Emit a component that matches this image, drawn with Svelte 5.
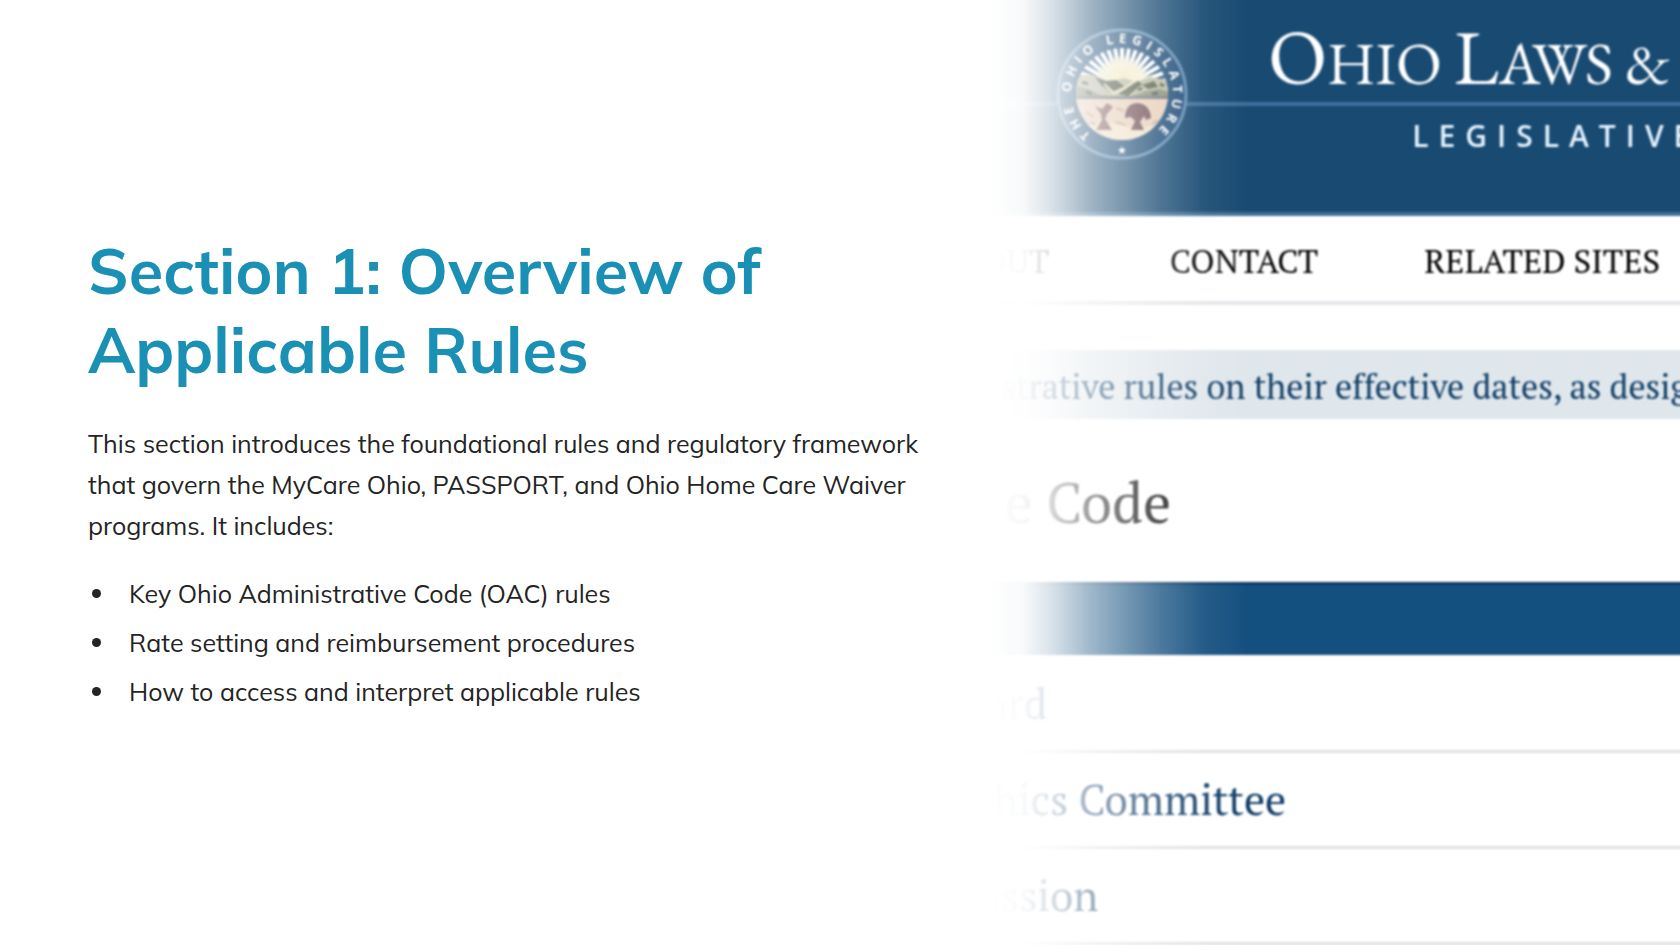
<script>
  const points = [
    'Key Ohio Administrative Code (OAC) rules',
    'Rate setting and reimbursement procedures',
    'How to access and interpret applicable rules'
  ];

  // Distance from the panel's edge, or the previous label, to the end of each label.
  const nav = [
    { label: 'OUT', width: 58 },
    { label: 'CONTACT', width: 269 },
    { label: 'RELATED SITES', width: 342 }
  ];

  const rows = [
    { label: 'ard', end: 56 },
    { label: 'hics Committee', end: 295 },
    { label: 'ission', end: 107 }
  ];

  const rays = Array.from({ length: 19 }, (_, i) => 180 + i * 10);
</script>

<main class="slide">
  <section class="copy">
    <h1>Section 1: Overview of Applicable Rules</h1>
    <p>
      This section introduces the foundational rules and regulatory framework that govern the
      MyCare Ohio, PASSPORT, and Ohio Home Care Waiver programs. It includes:
    </p>
    <ul>
      {#each points as point}
        <li>{point}</li>
      {/each}
    </ul>
  </section>

  <section class="site">
    <div class="page">
      <header class="banner">
        <svg class="seal" viewBox="-66 -66 132 132" role="img" aria-label="The Ohio Legislature">
          <defs>
            <clipPath id="disc"><circle r="46" /></clipPath>
            <path id="ring" d="M0 51 A51 51 0 0 1 0 -51 A51 51 0 0 1 0 51" />
            <radialGradient id="sun" gradientUnits="userSpaceOnUse" cx="0" cy="-12" r="30">
              <stop offset="0" stop-color="#f3e8b4" />
              <stop offset="0.6" stop-color="#f2ecd0" />
              <stop offset="1" stop-color="#f2ecd0" stop-opacity="0" />
            </radialGradient>
          </defs>
          <circle r="64" fill="#1d4c77" stroke="#5f8db5" stroke-width="3" />
          <g clip-path="url(#disc)">
            <g stroke="#fff" stroke-width="4">
              {#each rays as angle}
                <line x1="14" y1="0" x2="46" y2="0" transform="translate(0 -6) rotate({angle})" />
              {/each}
            </g>
            <circle cy="-10" r="28" fill="url(#sun)" />
            <path d="M-46 -17 Q-34 -22 -22 -16 L-12 -12 L2 -16 L14 -12 L28 -17 L46 -14 V8 H-46Z" fill="#b8b8a0" />
            <path d="M-27 -17 L-16 -13 L-6 -14 L2 -8 L-10 -2 L-20 -8Z" fill="#4c5746" />
            <path d="M-18 -10 L-8 -1 L0 -4 L14 -14" fill="none" stroke="#e7e3c2" stroke-width="2" />
            <path d="M-4 0 L16 -13 L20 -10 L6 2Z M20 -9 L32 -13 L36 -7 L26 -5Z" fill="#4f5a45" />
            <path d="M-46 -8 L-34 -5 L-22 1 L-6 3 L10 2 L24 -3 L38 -5 L46 -2 V8 H-46Z" fill="#858b74" />
            <path d="M-40 -12 L-34 -10 M-36 -2 L-30 0 M16 -4 L20 -6 M30 0 L36 -1 M38 -10 L42 -8" stroke="#4c5746" stroke-width="3" />
            <path d="M-46 2 H46 V6 H-46Z" fill="#6d7478" />
            <path d="M-46 5 H46 V48 H-46Z" fill="#e6cdb8" />
            <path d="M-46 34 Q-10 24 12 36 Q30 30 46 34 V48 H-46Z" fill="#efe0c8" />
            <path d="M-27 12 L-20 15 L-15 9 L-9 13 L-15 20 L-17 25 L-10 36 L-26 36 L-20 26 L-21 20Z" fill="#80605f" />
            <path d="M3 24 Q3 10 15 9 Q28 10 29 24 L24 26 L22 22 L18 28 L22 36 H9 L13 27 L9 23Z" fill="#6b4a50" />
            <path d="M-36 18 L-28 23 M-32 28 L-26 31 M-6 14 L2 17 M-6 28 L3 31 M30 30 L36 26" stroke="#c7a58d" stroke-width="2" />
          </g>
          <text class="motto"><textPath href="#ring" startOffset="33">THE OHIO LEGISLATURE</textPath></text>
          <text class="star" x="0" y="60">★</text>
        </svg>
        <div class="brand">
          <div class="name"><b>O</b>HIO <b>L</b>AWS &amp;</div>
          <div class="agency">LEGISLATIVE</div>
        </div>
      </header>

      <nav class="menu">
        {#each nav as item}
          <span style:width="{item.width}px">{item.label}</span>
        {/each}
      </nav>

      <div class="notice"><span>strative rules on their effective dates, as desig</span></div>
      <h2><span>e Code</span></h2>
      <div class="bar"></div>

      <div class="list">
        {#each rows as row}
          <div class="row"><span style:width="{row.end}px">{row.label}</span></div>
        {/each}
      </div>
    </div>
  </section>
</main>

<style>
  :global(body) {
    margin: 0;
    background: #fff;
  }

  .slide {
    display: grid;
    grid-template-columns: 59fr 41fr;
    height: 100vh;
    overflow: hidden;
    background: #fff;
  }

  .copy {
    display: flex;
    flex-direction: column;
    justify-content: center;
    padding: 0 60px 2px 88px;
    color: #242424;
    font-family: Mulish, Lato, sans-serif;
    font-size: 25px;
    line-height: 41px;
  }

  h1 {
    margin: 0 0 34px;
    color: #1a90b5;
    font-size: 63px;
    font-weight: 700;
    line-height: 79px;
  }

  .copy p {
    margin: 0 0 27px;
  }

  ul {
    display: grid;
    gap: 8px;
    margin: 0;
    padding: 0;
    list-style: none;
  }

  li {
    display: flex;
    align-items: center;
    gap: 28px;
    padding-left: 4px;
  }

  li::before {
    content: '';
    width: 9px;
    height: 9px;
    border-radius: 50%;
    background: #242424;
  }

  .site {
    --fade: linear-gradient(
      90deg,
      transparent 0,
      rgba(0, 0, 0, 0.03) 32px,
      rgba(0, 0, 0, 0.14) 56px,
      rgba(0, 0, 0, 0.27) 78px,
      rgba(0, 0, 0, 0.41) 100px,
      rgba(0, 0, 0, 0.53) 123px,
      rgba(0, 0, 0, 0.75) 167px,
      rgba(0, 0, 0, 0.93) 212px,
      #000 256px
    );
    min-width: 0;
    overflow: hidden;
    font-family: 'PT Serif', 'Liberation Serif', serif;
    white-space: nowrap;
    -webkit-mask-image: var(--fade);
    mask-image: var(--fade);
  }

  .page {
    margin: -4px -4px 0 0;
    filter: blur(1px);
  }

  .banner {
    position: relative;
    display: flex;
    gap: 80px;
    height: 212px;
    padding: 4px 0 0 65px;
    border-bottom: 4px solid #416f94;
    background: #184a72;
  }

  .banner::before {
    content: '';
    position: absolute;
    inset: 106px 0 auto;
    height: 4px;
    background: #416f9c;
  }

  .seal {
    position: relative;
    flex: none;
    width: 132px;
    height: 132px;
    margin-top: 28px;
  }

  .motto {
    fill: #fff;
    font: 700 13px 'Open Sans', sans-serif;
    letter-spacing: 5px;
  }

  .star {
    fill: #fff;
    font: 11px 'DejaVu Sans', sans-serif;
    text-anchor: middle;
  }

  .brand {
    color: #fff;
  }

  .name {
    padding-top: 18px;
    font-family: 'EB Garamond', 'Liberation Serif', serif;
    font-size: 60px;
    line-height: 88px;
  }

  .name b {
    font-size: 77px;
    font-weight: 400;
    line-height: 1;
  }

  .agency {
    padding: 9px 0 0 144px;
    color: #e6f4ff;
    font: 600 30px/40px 'Open Sans', sans-serif;
    letter-spacing: 10px;
  }

  .menu {
    display: flex;
    height: 85px;
    border-bottom: 4px solid #e4e7ea;
    color: #000;
    font-size: 33px;
    line-height: 89px;
  }

  .menu span,
  .notice span,
  h2 span,
  .row span {
    display: flex;
    flex: none;
    justify-content: flex-end;
  }

  .notice {
    height: 69px;
    margin-top: 45px;
    background: #e0e7ec;
    color: #0f3d66;
    font-size: 34px;
    line-height: 73px;
  }

  .notice span {
    justify-content: flex-start;
    padding-left: 10px;
  }

  h2 {
    margin: 0;
    padding-top: 4px;
    color: #111;
    font-size: 56px;
    font-weight: 400;
    line-height: 159px;
  }

  h2 span {
    width: 180px;
  }

  .bar {
    height: 70px;
    border-top: 3px solid #0e3a63;
    background: #14507f;
  }

  .list {
    padding-top: 2px;
  }

  .row {
    height: 93px;
    border-bottom: 3px solid #e0e0e3;
    color: #0f3d66;
    font-size: 42px;
    line-height: 92px;
  }
</style>
